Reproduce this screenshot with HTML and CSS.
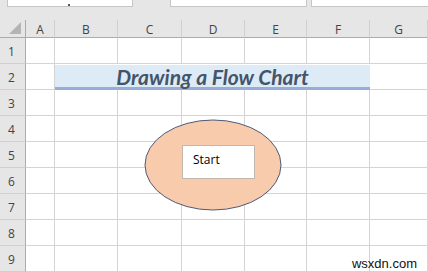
FILE: index.html
```html
<!DOCTYPE html>
<html lang="en">
<head>
    <meta charset="UTF-8">
    <meta name="viewport" content="width=device-width, initial-scale=1.0">
    <title>Drawing a Flow Chart</title>
    <link rel="stylesheet" href="styles.css">
</head>
<body>
    <div class="toolbar">
        <div class="box name-box"><span class="tick"></span></div>
        <div class="box fx-box"></div>
        <div class="box formula-box"></div>
    </div>

    <div class="sheet">
        <div class="corner"><span class="triangle"></span></div>
        <div class="col-head">A</div>
        <div class="col-head">B</div>
        <div class="col-head">C</div>
        <div class="col-head">D</div>
        <div class="col-head">E</div>
        <div class="col-head">F</div>
        <div class="col-head">G</div>

        <div class="row-head">1</div>
        <div class="cell"></div><div class="cell"></div><div class="cell"></div><div class="cell"></div><div class="cell"></div><div class="cell"></div><div class="cell"></div>

        <div class="row-head">2</div>
        <div class="cell"></div>
        <div class="cell title">Drawing a Flow Chart</div>
        <div class="cell"></div>

        <div class="row-head">3</div>
        <div class="cell"></div><div class="cell"></div><div class="cell"></div><div class="cell"></div><div class="cell"></div><div class="cell"></div><div class="cell"></div>
        <div class="row-head">4</div>
        <div class="cell"></div><div class="cell"></div><div class="cell"></div><div class="cell"></div><div class="cell"></div><div class="cell"></div><div class="cell"></div>
        <div class="row-head">5</div>
        <div class="cell"></div><div class="cell"></div><div class="cell"></div><div class="cell"></div><div class="cell"></div><div class="cell"></div><div class="cell"></div>
        <div class="row-head">6</div>
        <div class="cell"></div><div class="cell"></div><div class="cell"></div><div class="cell"></div><div class="cell"></div><div class="cell"></div><div class="cell"></div>
        <div class="row-head">7</div>
        <div class="cell"></div><div class="cell"></div><div class="cell"></div><div class="cell"></div><div class="cell"></div><div class="cell"></div><div class="cell"></div>
        <div class="row-head">8</div>
        <div class="cell"></div><div class="cell"></div><div class="cell"></div><div class="cell"></div><div class="cell"></div><div class="cell"></div><div class="cell"></div>
        <div class="row-head">9</div>
        <div class="cell"></div><div class="cell"></div><div class="cell"></div><div class="cell"></div><div class="cell"></div><div class="cell"></div><div class="cell"></div>

        <svg class="ellipse" width="138" height="92" viewBox="0 0 138 92">
            <ellipse cx="69" cy="46" rx="68" ry="45" fill="#f8cbad" stroke="#4f5a78" stroke-width="1"/>
        </svg>
        <div class="start-box">Start</div>
    </div>

    <div class="watermark">wsxdn.com</div>
</body>
</html>
```

FILE: styles.css
```css
body {
    margin: 0;
    width: 428px;
    height: 272px;
    overflow: hidden;
    background: #fff;
    font-family: "Open Sans", Arial, sans-serif;
    color: #222;
    position: relative;
}
.toolbar {
    height: 20px;
    background: #e6e6e6;
    position: relative;
    display: flex;
}
.box {
    height: 7px;
    background: #fff;
    border: 1px solid #c6c6c6;
    border-top: none;
    box-sizing: border-box;
    position: relative;
}
.name-box {
    margin-left: 7px;
    width: 126px;
}
.tick {
    position: absolute;
    left: 60px;
    bottom: 0;
    width: 2px;
    height: 2px;
    background: #555;
}
.fx-box {
    margin-left: 37px;
    width: 137px;
}
.formula-box {
    margin-left: 4px;
    flex: 1;
    border-right: none;
}
.sheet {
    display: grid;
    grid-template-columns: 26px 29px 63px 64px 63px 62px 63px 58px;
    grid-template-rows: 18px repeat(9, 26px);
    position: relative;
}
.corner, .col-head, .row-head {
    background: #e6e6e6;
    box-sizing: border-box;
    color: #444;
    font-size: 12px;
    display: flex;
    align-items: center;
    justify-content: center;
}
.corner {
    border-right: 1px solid #ababab;
    border-bottom: 1px solid #ababab;
    position: relative;
}
.triangle {
    position: absolute;
    right: 4px;
    bottom: 3px;
    width: 0;
    height: 0;
    border-left: 12px solid transparent;
    border-bottom: 12px solid #b4b4b4;
}
.col-head {
    border-right: 1px solid #d0d0d0;
    border-bottom: 1px solid #ababab;
    padding-top: 1px;
}
.row-head {
    border-right: 1px solid #ababab;
    border-bottom: 1px solid #d0d0d0;
    justify-content: flex-start;
    padding-left: 8px;
    padding-top: 2px;
}
.cell {
    border-right: 1px solid #d4d4d4;
    border-bottom: 1px solid #d4d4d4;
    box-sizing: border-box;
}
.title {
    grid-column: 3 / span 5;
    background: #ddebf7;
    border-bottom: 3px solid #97acd6;
    border-right: none;
    margin-top: 1px;
    display: flex;
    align-items: center;
    justify-content: center;
    font-family: "Lato", "Open Sans", sans-serif;
    font-weight: bold;
    font-style: italic;
    font-size: 21px;
    color: #44546a;
    padding-top: 1px;
}
.ellipse {
    position: absolute;
    left: 144px;
    top: 99px;
}
.start-box {
    position: absolute;
    left: 182px;
    top: 125px;
    width: 73px;
    height: 34px;
    box-sizing: border-box;
    background: #fff;
    border: 1px solid #c3b6ad;
    font-family: "Open Sans", Arial, sans-serif;
    font-size: 12px;
    color: #000;
    padding: 5px 0 0 10px;
}
.watermark {
    position: absolute;
    right: 11px;
    bottom: 1px;
    font-family: "Liberation Sans", Arial, sans-serif;
    font-size: 13px;
    color: #111;
}
```
